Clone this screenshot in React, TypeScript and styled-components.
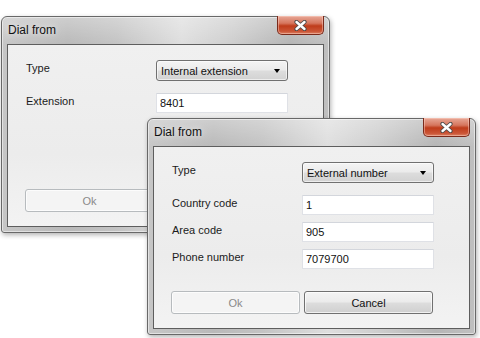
import styled, { createGlobalStyle } from 'styled-components';

const GlobalStyle = createGlobalStyle`
  html, body {
    margin: 0;
    background: #fff;
  }
  body {
    font-family: "Liberation Sans", Arial, sans-serif;
  }
`;

const Desktop = styled.div`
  position: relative;
  width: 480px;
  height: 338px;
  overflow: hidden;
  background: #fff;
`;

// windows on a desktop: placed by coordinates
const Window = styled.div<{ $x: number; $y: number }>`
  position: absolute;
  left: ${(p) => p.$x}px;
  top: ${(p) => p.$y}px;
  width: 329px;
  height: 217px;
  box-sizing: border-box;
  display: flex;
  flex-direction: column;
  border: 1px solid #686868;
  border-radius: 6px 6px 3px 3px;
  background:
    linear-gradient(180deg, rgba(255, 255, 255, 0.3) 0px, rgba(255, 255, 255, 0) 28px),
    linear-gradient(90deg, #c6c6c6 0%, #b9b9b9 20%, #c3c3c3 35%, #dedede 55%, #cecece 70%, #b5b5b5 88%, #c0c0c0 100%);
  box-shadow: 1px 2px 5px rgba(0, 0, 0, 0.3), inset 0 0 0 1px rgba(255, 255, 255, 0.5);
`;

const TitleBar = styled.div`
  display: flex;
  align-items: flex-start;
  height: 27px;
  flex: none;
`;

const Title = styled.span`
  padding-left: 6px;
  line-height: 27px;
  font-size: 12px;
  color: #111;
  text-shadow: 0 0 6px rgba(255, 255, 255, 0.9);
`;

const CloseButton = styled.div`
  margin-left: auto;
  margin-right: 5px;
  margin-top: -1px;
  width: 47px;
  height: 19px;
  box-sizing: border-box;
  display: flex;
  align-items: center;
  justify-content: center;
  border: 1px solid #7a2a1b;
  border-top: none;
  border-radius: 0 0 5px 5px;
  background: linear-gradient(180deg, #e8a897 0%, #d6765e 40%, #bf3c1b 55%, #cb5536 85%, #dc8264 100%);
  box-shadow: inset 0 0 0 1px rgba(255, 215, 205, 0.45);
`;

const Client = styled.div`
  flex: 1;
  margin: 0 5px 5px 5px;
  border: 1px solid #5e5e5e;
  background: linear-gradient(180deg, #f0f0f0 0%, #ececec 60%, #f3f3f3 100%);
  padding: 15px 0 14px 18px;
  display: flex;
  flex-direction: column;
`;

const Row = styled.div<{ $spaced?: boolean }>`
  display: flex;
  align-items: flex-start;
  margin-bottom: ${(p) => (p.$spaced ? 12 : 7)}px;
`;

const Label = styled.div`
  width: 130px;
  padding-top: 1px;
  font-size: 11px;
  line-height: 14px;
  color: #1b1b1b;
`;

const Select = styled.div`
  width: 132px;
  height: 21px;
  box-sizing: border-box;
  display: flex;
  align-items: center;
  padding: 0 7px 0 4px;
  border: 1px solid #707070;
  border-radius: 3px;
  background: linear-gradient(180deg, #f4f4f4 0%, #ebebeb 48%, #dddddd 52%, #d2d2d2 100%);
  box-shadow: inset 0 0 0 1px rgba(255, 255, 255, 0.6);
  font-size: 11px;
  color: #111;
`;

const SelectText = styled.span`
  flex: 1;
`;

const Arrow = styled.span`
  width: 0;
  height: 0;
  border-left: 3.5px solid transparent;
  border-right: 3.5px solid transparent;
  border-top: 4px solid #000;
`;

const TextBox = styled.input`
  width: 132px;
  height: 20px;
  box-sizing: border-box;
  margin: 0;
  padding: 0 3px;
  border: 1px solid #dfe1e6;
  border-top-color: #d3d6dc;
  border-radius: 1px;
  background: #fff;
  font-family: inherit;
  font-size: 11px;
  color: #111;
  outline: none;
`;

const ButtonRow = styled.div`
  margin-top: auto;
  margin-left: -1px;
  display: flex;
  gap: 4px;
`;

const Button = styled.div<{ $disabled?: boolean }>`
  width: 129px;
  height: 23px;
  box-sizing: border-box;
  display: flex;
  align-items: center;
  justify-content: center;
  border-radius: 3px;
  font-size: 11px;
  border: 1px solid ${(p) => (p.$disabled ? '#b7bbbe' : '#707070')};
  color: ${(p) => (p.$disabled ? '#8a8a8a' : '#111')};
  background: ${(p) =>
    p.$disabled
      ? '#f4f4f4'
      : 'linear-gradient(180deg, #f3f3f3 0%, #ebebeb 48%, #dddddd 52%, #cfcfcf 100%)'};
  box-shadow: inset 0 0 0 1px rgba(255, 255, 255, 0.7);
`;

const CloseIcon = () => (
  <svg width="13" height="11" viewBox="0 0 13 11">
    <path d="M2.5 2 L10.5 9 M10.5 2 L2.5 9" stroke="#4a4a4a" strokeWidth="4.2" strokeLinecap="round" />
    <path d="M2.5 2 L10.5 9 M10.5 2 L2.5 9" stroke="#fff" strokeWidth="2.4" strokeLinecap="round" />
  </svg>
);

type Field = { label: string; value: string };

interface DialogProps {
  x: number;
  y: number;
  type: string;
  fields: Field[];
  showCancel?: boolean;
}

const DialFromDialog = ({ x, y, type, fields, showCancel }: DialogProps) => (
  <Window $x={x} $y={y}>
    <TitleBar>
      <Title>Dial from</Title>
      <CloseButton>
        <CloseIcon />
      </CloseButton>
    </TitleBar>
    <Client>
      <Row $spaced>
        <Label>Type</Label>
        <Select>
          <SelectText>{type}</SelectText>
          <Arrow />
        </Select>
      </Row>
      {fields.map((f) => (
        <Row key={f.label}>
          <Label>{f.label}</Label>
          <TextBox readOnly defaultValue={f.value} />
        </Row>
      ))}
      <ButtonRow>
        <Button $disabled>Ok</Button>
        {showCancel && <Button>Cancel</Button>}
      </ButtonRow>
    </Client>
  </Window>
);

const App = () => (
  <>
    <GlobalStyle />
    <Desktop>
      <DialFromDialog
        x={1}
        y={16}
        type="Internal extension"
        fields={[{ label: 'Extension', value: '8401' }]}
      />
      <DialFromDialog
        x={147}
        y={118}
        type="External number"
        fields={[
          { label: 'Country code', value: '1' },
          { label: 'Area code', value: '905' },
          { label: 'Phone number', value: '7079700' },
        ]}
        showCancel
      />
    </Desktop>
  </>
);

export default App;
